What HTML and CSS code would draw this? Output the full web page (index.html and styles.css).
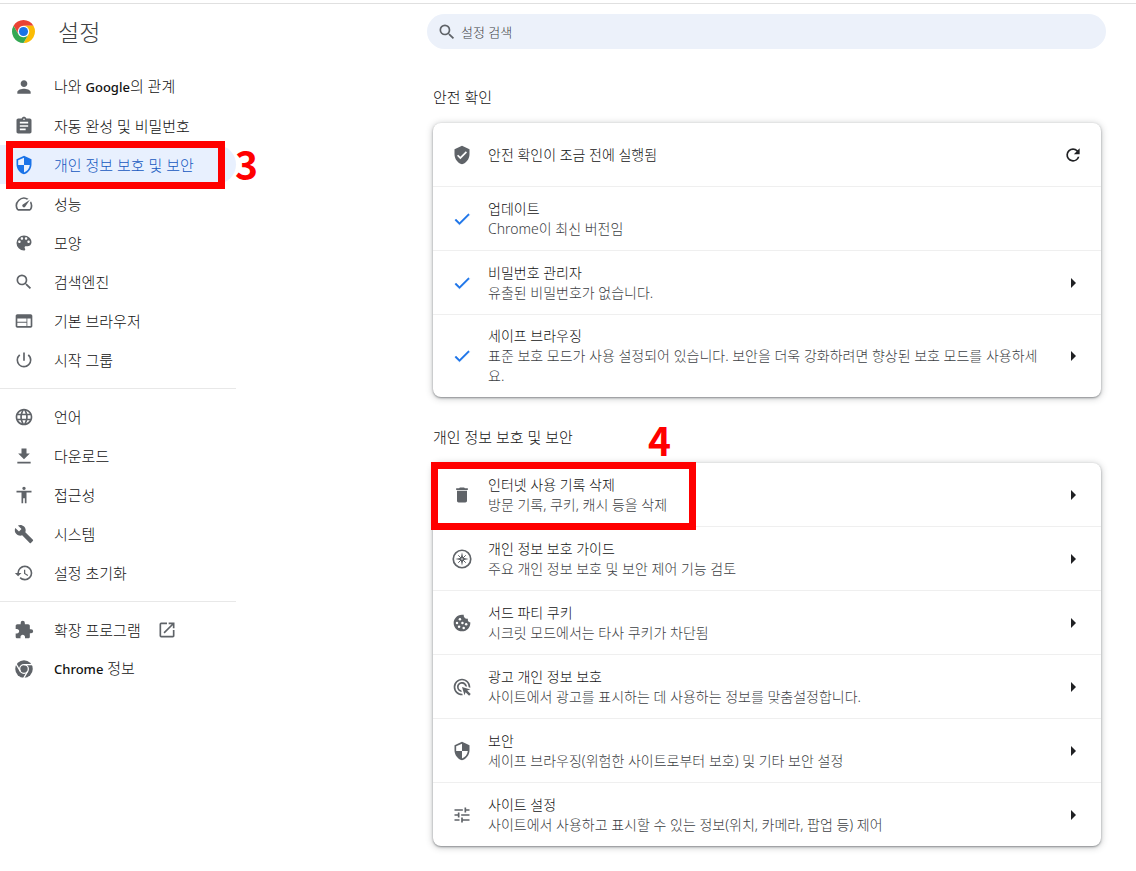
FILE: index.html
```html
<!DOCTYPE html>
<html lang="ko">
<head>
   <meta charset="utf-8">
   <title>설정</title>
   <link rel="stylesheet" href="styles.css">
</head>
<body>
   <svg class="icon-defs" aria-hidden="true">
      <symbol id="person" viewBox="0 0 24 24"><path d="M12 12c2.21 0 4-1.79 4-4s-1.79-4-4-4-4 1.79-4 4 1.79 4 4 4zm0 2c-2.67 0-8 1.34-8 4v2h16v-2c0-2.66-5.33-4-8-4z"/></symbol>
      <symbol id="assignment" viewBox="0 0 24 24"><path d="M19 3h-4.18C14.4 1.84 13.3 1 12 1c-1.3 0-2.4.84-2.82 2H5c-1.1 0-2 .9-2 2v14c0 1.1.9 2 2 2h14c1.1 0 2-.9 2-2V5c0-1.1-.9-2-2-2zm-7 0c.55 0 1 .45 1 1s-.45 1-1 1-1-.45-1-1 .45-1 1-1zm2 14H7v-2h7v2zm3-4H7v-2h10v2zm0-4H7V7h10v2z"/></symbol>
      <symbol id="security" viewBox="0 0 24 24"><path d="M12 1L3 5v6c0 5.55 3.84 10.74 9 12 5.16-1.26 9-6.45 9-12V5l-9-4zm0 10.99h7c-.53 4.12-3.28 7.79-7 8.94V12H5V6.3l7-3.11v8.8z"/></symbol>
      <symbol id="verified" viewBox="0 0 24 24"><path d="M12 1L3 5v6c0 5.55 3.84 10.74 9 12 5.16-1.26 9-6.45 9-12V5l-9-4zm-2 16l-4-4 1.41-1.41L10 14.17l6.59-6.59L18 9l-8 8z"/></symbol>
      <symbol id="speed" viewBox="0 0 24 24"><path d="M20.38 8.57l-1.23 1.85a8 8 0 0 1-.22 7.58H5.07A8 8 0 0 1 15.58 6.85l1.85-1.23A10 10 0 0 0 3.35 19a2 2 0 0 0 1.72 1h13.85a2 2 0 0 0 1.74-1 10 10 0 0 0-.27-10.44zm-9.79 6.84a2 2 0 0 0 2.83 0l5.66-8.49-8.49 5.66a2 2 0 0 0 0 2.83z"/></symbol>
      <symbol id="palette" viewBox="0 0 24 24"><path d="M12 3a9 9 0 0 0 0 18c.83 0 1.5-.67 1.5-1.5 0-.39-.15-.74-.39-1.01-.23-.26-.38-.61-.38-.99 0-.83.67-1.5 1.5-1.5H16c2.76 0 5-2.24 5-5 0-4.42-4.03-8-9-8zm-5.500 9c-.83 0-1.500-.67-1.500-1.500S5.670 9 6.500 9 8 9.670 8 10.500 7.330 12 6.500 12zm3-4C8.670 8 8 7.330 8 6.500S8.670 5 9.500 5s1.500.67 1.500 1.500S10.330 8 9.500 8zm5 0c-.83 0-1.500-.67-1.500-1.500S13.670 5 14.500 5s1.500.67 1.500 1.500S15.330 8 14.500 8zm3 4c-.83 0-1.500-.67-1.500-1.500S16.670 9 17.500 9s1.500.67 1.500 1.500-.67 1.500-1.500 1.500z"/></symbol>
      <symbol id="search" viewBox="0 0 24 24"><path d="M15.5 14h-.79l-.28-.27A6.47 6.47 0 0 0 16 9.5 6.5 6.5 0 1 0 9.500 16c1.610 0 3.090-.59 4.230-1.570l.27.28v.79l5 4.990L20.490 19l-4.990-5zm-6 0C7.010 14 5 11.990 5 9.500S7.010 5 9.500 5 14 7.010 14 9.500 11.990 14 9.500 14z"/></symbol>
      <symbol id="web" viewBox="0 0 24 24"><path d="M20 4H4c-1.1 0-1.990.9-1.990 2L2 18c0 1.1.9 2 2 2h16c1.100 0 2-.9 2-2V6c0-1.100-.9-2-2-2zm-5 14H4v-4h11v4zm0-5H4V9h11v4zm5 5h-4V9h4v9z"/></symbol>
      <symbol id="power" viewBox="0 0 24 24"><path d="M13 3h-2v10h2V3zm4.830 2.170l-1.420 1.420A6.920 6.920 0 0 1 19 12c0 3.870-3.130 7-7 7A6.995 6.995 0 0 1 7.580 6.580L6.170 5.170A8.932 8.932 0 0 0 3 12a9 9 0 0 0 18 0c0-2.740-1.230-5.180-3.170-6.830z"/></symbol>
      <symbol id="language" viewBox="0 0 24 24"><path d="M11.990 2C6.470 2 2 6.480 2 12s4.470 10 9.990 10C17.520 22 22 17.520 22 12S17.520 2 11.990 2zm6.930 6h-2.950a15.650 15.650 0 0 0-1.380-3.560A8.030 8.030 0 0 1 18.920 8zM12 4.040c.83 1.200 1.480 2.530 1.910 3.960h-3.820c.43-1.430 1.080-2.760 1.910-3.960zM4.260 14C4.100 13.360 4 12.690 4 12s.1-1.360.26-2h3.380c-.08.66-.14 1.320-.14 2s.06 1.340.14 2H4.260zm.82 2h2.950c.32 1.250.78 2.450 1.380 3.560A7.987 7.987 0 0 1 5.080 16zm2.950-8H5.080a7.987 7.987 0 0 1 4.330-3.560A15.650 15.650 0 0 0 8.030 8zM12 19.960c-.83-1.200-1.480-2.530-1.910-3.960h3.820c-.43 1.430-1.080 2.760-1.910 3.960zM14.340 14H9.660c-.09-.66-.16-1.320-.16-2s.07-1.350.16-2h4.680c.09.65.16 1.320.16 2s-.07 1.340-.16 2zm.25 5.560c.6-1.110 1.060-2.310 1.380-3.560h2.950a8.030 8.030 0 0 1-4.330 3.560zM16.360 14c.08-.66.14-1.320.14-2s-.06-1.340-.14-2h3.380c.16.64.26 1.310.26 2s-.1 1.360-.26 2h-3.380z"/></symbol>
      <symbol id="download" viewBox="0 0 24 24"><path d="M19 9h-4V3H9v6H5l7 7 7-7zM4 19v2h16v-2H4z"/></symbol>
      <symbol id="accessibility" viewBox="0 0 24 24"><path d="M12 2c1.100 0 2 .9 2 2s-.9 2-2 2-2-.9-2-2 .9-2 2-2zm9 7h-6v13h-2v-6h-2v6H9V9H3V7h18v2z"/></symbol>
      <symbol id="build" viewBox="0 0 24 24"><path d="M22.700 19l-9.100-9.100c.9-2.300.4-5-1.500-6.900-2-2-5-2.400-7.400-1.300L9 6 6 9 1.600 4.700C.4 7.100.9 10.100 2.900 12.100c1.900 1.900 4.600 2.400 6.900 1.500l9.100 9.100c.4.4 1 .4 1.400 0l2.300-2.300c.5-.4.5-1.100.1-1.400z"/></symbol>
      <symbol id="restore" viewBox="0 0 24 24"><path d="M13 3a9 9 0 0 0-9 9H1l3.890 3.890.07.14L9 12H6c0-3.870 3.130-7 7-7s7 3.130 7 7-3.130 7-7 7c-1.930 0-3.680-.79-4.940-2.060l-1.420 1.420A8.954 8.954 0 0 0 13 21a9 9 0 0 0 0-18zm-1 5v5l4.280 2.540.72-1.210-3.500-2.080V8H12z"/></symbol>
      <symbol id="extension" viewBox="0 0 24 24"><path d="M20.500 11H19V7c0-1.100-.9-2-2-2h-4V3.500a2.500 2.500 0 0 0-5 0V5H4c-1.100 0-1.990.9-1.990 2v3.800H3.500c1.490 0 2.700 1.210 2.700 2.700s-1.210 2.700-2.700 2.700H2V20c0 1.100.9 2 2 2h3.800v-1.500c0-1.490 1.210-2.700 2.700-2.700s2.700 1.210 2.700 2.700V22H17c1.100 0 2-.9 2-2v-4h1.500a2.500 2.500 0 0 0 0-5z"/></symbol>
      <symbol id="open" viewBox="0 0 24 24"><path d="M19 19H5V5h7V3H5a2 2 0 0 0-2 2v14a2 2 0 0 0 2 2h14c1.100 0 2-.9 2-2v-7h-2v7zM14 3v2h3.590l-9.830 9.830 1.410 1.410L19 6.410V10h2V3h-7z"/></symbol>
      <symbol id="chrome" viewBox="0 0 24 24">
         <circle cx="12" cy="12" r="10.500"/>
         <g fill="none" stroke="#fff" stroke-width="1.500"><circle cx="12" cy="12" r="5.200"/><path d="M12 6.800h10.500M7.500 14.600L2.400 5.800M16.500 14.600L11.200 23.800"/></g>
      </symbol>
      <symbol id="check" viewBox="0 0 24 24"><path stroke="currentColor" stroke-width=".5" d="M9 16.170L4.830 12l-1.420 1.410L9 19 21 7l-1.410-1.410z"/></symbol>
      <symbol id="refresh" viewBox="0 0 24 24"><path d="M17.650 6.350A7.958 7.958 0 0 0 12 4a8 8 0 1 0 7.730 10h-2.080A5.990 5.990 0 0 1 12 18a6 6 0 1 1 0-12c1.660 0 3.140.69 4.220 1.780L13 11h7V4l-2.350 2.350z"/></symbol>
      <symbol id="delete" viewBox="0 0 24 24"><path d="M6 19c0 1.100.9 2 2 2h8c1.100 0 2-.9 2-2V7H6v12zM19 4h-3.500l-1-1h-5l-1 1H5v2h14V4z"/></symbol>
      <symbol id="guide" viewBox="0 0 24 24">
         <circle cx="12" cy="12" r="10.500" fill="none" stroke="currentColor" stroke-width="2"/>
         <path d="M12 4l1.500 6.500L20 12l-6.500 1.500L12 20l-1.500-6.500L4 12l6.500-1.500z"/>
         <path d="M7.500 7.500l9 9M16.500 7.500l-9 9" stroke="currentColor" stroke-width="1.200"/>
         <circle cx="12" cy="12" r="1" fill="#fff"/>
      </symbol>
      <symbol id="cookie" viewBox="0 0 24 24">
         <path d="M21.950 10.990c-1.790-.03-3.700-1.950-2.680-4.220-2.980 1-5.770-1.590-5.190-4.560C6.950.71 2 6.580 2 12c0 5.520 4.480 10 10 10 5.890 0 10.540-5.080 9.950-11.010z"/>
         <g fill="#fff"><circle cx="9.500" cy="7.500" r="1.500"/><circle cx="6" cy="12" r="1.500"/><circle cx="12.500" cy="12" r="1.500"/><circle cx="8.500" cy="16.500" r="1.500"/><circle cx="14" cy="18" r="1.500"/><circle cx="17" cy="13.500" r="1.500"/></g>
      </symbol>
      <symbol id="ads" viewBox="0 0 24 24"><path d="M11.710 17.990A5.993 5.993 0 0 1 6 12c0-3.310 2.690-6 6-6 3.220 0 5.840 2.530 5.990 5.710l-2.100-.63a3.999 3.999 0 1 0-4.810 4.810l.63 2.100zM22 12c0 .3-.01.6-.04.900l-1.970-.59c.01-.1.010-.21.010-.31a8 8 0 1 0-8 8c.1 0 .21 0 .31-.01l.59 1.970c-.3.03-.6.04-.9.040-5.520 0-10-4.480-10-10S6.480 2 12 2s10 4.480 10 10zm-3.770 4.260L22 15l-10-3 3 10 1.260-3.770 4.270 4.270 1.980-1.980-4.280-4.260z"/></symbol>
      <symbol id="tune" viewBox="0 0 24 24"><path d="M3 17v2h6v-2H3zM3 5v2h10V5H3zm10 16v-2h8v-2h-8v-2h-2v6h2zM7 9v2H3v2h4v2h2V9H7zm14 4v-2H11v2h10zm-6-4h2V7h4V5h-4V3h-2v6z"/></symbol>
      <symbol id="arrow" viewBox="0 0 6 10"><path d="M1 0l5 5-5 5z"/></symbol>
   </svg>

   <div class="layout">
      <aside class="sidebar">
         <header class="brand">
            <svg class="logo" viewBox="0 0 48 48" aria-hidden="true">
               <circle cx="24" cy="24" r="13" fill="#fff"/>
               <path fill="#ea4335" d="M24 12h20.780A24 24 0 0 0 3.220 12l10.390 18A12 12 0 0 1 24 12z"/>
               <path fill="#fbbc04" d="M34.390 30L24 48a24 24 0 0 0 20.780-36H24a12 12 0 0 1 10.390 18z"/>
               <path fill="#34a853" d="M13.610 30L3.220 12A24 24 0 0 0 24 48l10.390-18a12 12 0 0 1-20.780 0z"/>
               <circle cx="24" cy="24" r="9.500" fill="#1a73e8"/>
            </svg>
            <h1>설정</h1>
         </header>
         <nav>
            <div class="menu-group">
               <a class="menu-item" href="#people"><svg class="icon"><use href="#person"/></svg><span>나와 <b>Google</b>의 관계</span></a>
               <a class="menu-item" href="#autofill"><svg class="icon"><use href="#assignment"/></svg>자동 완성 및 비밀번호</a>
               <a class="menu-item active" href="#privacy"><svg class="icon"><use href="#security"/></svg>개인 정보 보호 및 보안
                  <span class="mark mark-menu"></span><span class="step step-menu">3</span></a>
               <a class="menu-item" href="#performance"><svg class="icon"><use href="#speed"/></svg>성능</a>
               <a class="menu-item" href="#appearance"><svg class="icon"><use href="#palette"/></svg>모양</a>
               <a class="menu-item" href="#engine"><svg class="icon"><use href="#search"/></svg>검색엔진</a>
               <a class="menu-item" href="#browser"><svg class="icon"><use href="#web"/></svg>기본 브라우저</a>
               <a class="menu-item" href="#startup"><svg class="icon"><use href="#power"/></svg>시작 그룹</a>
            </div>
            <div class="menu-group">
               <a class="menu-item" href="#languages"><svg class="icon"><use href="#language"/></svg>언어</a>
               <a class="menu-item" href="#downloads"><svg class="icon"><use href="#download"/></svg>다운로드</a>
               <a class="menu-item" href="#a11y"><svg class="icon"><use href="#accessibility"/></svg>접근성</a>
               <a class="menu-item" href="#system"><svg class="icon"><use href="#build"/></svg>시스템</a>
               <a class="menu-item" href="#reset"><svg class="icon"><use href="#restore"/></svg>설정 초기화</a>
            </div>
            <div class="menu-group">
               <a class="menu-item" href="#extensions"><svg class="icon"><use href="#extension"/></svg>확장 프로그램<svg class="icon"><use href="#open"/></svg></a>
               <a class="menu-item" href="#about"><svg class="icon"><use href="#chrome"/></svg><span><b>Chrome</b> 정보</span></a>
            </div>
         </nav>
      </aside>

      <main class="content">
         <label class="search">
            <svg class="icon"><use href="#search"/></svg>
            <input type="search" placeholder="설정 검색" aria-label="설정 검색">
         </label>

         <section>
            <h2>안전 확인</h2>
            <div class="card">
               <div class="row">
                  <svg class="icon"><use href="#verified"/></svg>
                  <div class="text"><p>안전 확인이 조금 전에 실행됨</p></div>
                  <button type="button" aria-label="안전 확인 다시 실행"><svg class="icon"><use href="#refresh"/></svg></button>
               </div>
               <div class="row">
                  <svg class="icon ok"><use href="#check"/></svg>
                  <div class="text"><p>업데이트</p><p class="sub">Chrome이 최신 버전임</p></div>
               </div>
               <div class="row">
                  <svg class="icon ok"><use href="#check"/></svg>
                  <div class="text"><p>비밀번호 관리자</p><p class="sub">유출된 비밀번호가 없습니다.</p></div>
                  <button type="button" aria-label="비밀번호 관리자"><svg class="arrow"><use href="#arrow"/></svg></button>
               </div>
               <div class="row">
                  <svg class="icon ok"><use href="#check"/></svg>
                  <div class="text"><p>세이프 브라우징</p><p class="sub">표준 보호 모드가 사용 설정되어 있습니다. 보안을 더욱 강화하려면 향상된 보호 모드를 사용하세요.</p></div>
                  <button type="button" aria-label="세이프 브라우징"><svg class="arrow"><use href="#arrow"/></svg></button>
               </div>
            </div>
         </section>

         <section>
            <h2>개인 정보 보호 및 보안</h2>
            <div class="card">
               <div class="row">
                  <svg class="icon"><use href="#delete"/></svg>
                  <div class="text"><p>인터넷 사용 기록 삭제</p><p class="sub">방문 기록, 쿠키, 캐시 등을 삭제</p></div>
                  <button type="button" aria-label="인터넷 사용 기록 삭제"><svg class="arrow"><use href="#arrow"/></svg></button>
                  <span class="mark mark-row"></span><span class="step step-row">4</span>
               </div>
               <div class="row">
                  <svg class="icon"><use href="#guide"/></svg>
                  <div class="text"><p>개인 정보 보호 가이드</p><p class="sub">주요 개인 정보 보호 및 보안 제어 기능 검토</p></div>
                  <button type="button" aria-label="개인 정보 보호 가이드"><svg class="arrow"><use href="#arrow"/></svg></button>
               </div>
               <div class="row">
                  <svg class="icon"><use href="#cookie"/></svg>
                  <div class="text"><p>서드 파티 쿠키</p><p class="sub">시크릿 모드에서는 타사 쿠키가 차단됨</p></div>
                  <button type="button" aria-label="서드 파티 쿠키"><svg class="arrow"><use href="#arrow"/></svg></button>
               </div>
               <div class="row">
                  <svg class="icon"><use href="#ads"/></svg>
                  <div class="text"><p>광고 개인 정보 보호</p><p class="sub">사이트에서 광고를 표시하는 데 사용하는 정보를 맞춤설정합니다.</p></div>
                  <button type="button" aria-label="광고 개인 정보 보호"><svg class="arrow"><use href="#arrow"/></svg></button>
               </div>
               <div class="row">
                  <svg class="icon"><use href="#security"/></svg>
                  <div class="text"><p>보안</p><p class="sub">세이프 브라우징(위험한 사이트로부터 보호) 및 기타 보안 설정</p></div>
                  <button type="button" aria-label="보안"><svg class="arrow"><use href="#arrow"/></svg></button>
               </div>
               <div class="row">
                  <svg class="icon"><use href="#tune"/></svg>
                  <div class="text"><p>사이트 설정</p><p class="sub">사이트에서 사용하고 표시할 수 있는 정보(위치, 카메라, 팝업 등) 제어</p></div>
                  <button type="button" aria-label="사이트 설정"><svg class="arrow"><use href="#arrow"/></svg></button>
               </div>
            </div>
         </section>
      </main>
   </div>
</body>
</html>
```
FILE: styles.css
```css
* {
   box-sizing: border-box;
}

body {
   margin: 0;
   padding-top: 3px;
   background-color: #fff;
   color: #111;
   font-family: "Noto Sans", "Noto Sans CJK KR", sans-serif;
   font-size: 14px;
   font-weight: 300;
   line-height: 20px;
}

h1, h2, p {
   margin: 0;
   font-weight: 300;
}

.icon-defs {
   position: absolute;
   width: 0;
   height: 0;
}

.icon {
   flex: none;
   width: 20px;
   height: 20px;
   color: #5f6368;
   fill: currentColor;
}

.layout {
   display: grid;
   grid-template-columns: 236px 1fr;
   border-top: 1px solid #e0e0e0;
}

/* sidebar */
.brand {
   display: flex;
   align-items: center;
   gap: 23px;
   height: 55px;
   padding-left: 12px;
}

.logo {
   width: 23px;
   height: 23px;
}

h1 {
   color: #3c4043;
   font-size: 23px;
   line-height: 32px;
}

.menu-group {
   padding: 8px 0 9px;
   border-bottom: 1px solid #e8e8e8;
}

.menu-group:last-child {
   border-bottom: none;
}

.menu-item {
   position: relative;
   display: flex;
   align-items: center;
   gap: 16px;
   height: 39px;
   padding-left: 14px;
   border-radius: 0 20px 20px 0;
   color: #111;
   font-size: 15px;
   text-decoration: none;
   white-space: nowrap;
}

.menu-item .icon:first-child {
   margin-right: 4px;
}

.menu-item b {
   font-size: 13px;
   font-weight: 500;
}

.menu-item.active {
   background-color: #e8f0fe;
   color: #1558c0;
}

.menu-item.active .icon {
   color: #1a73e8;
}

/* content */
.content {
   padding: 10px 35px 24px 197px;
}

.search {
   display: flex;
   align-items: center;
   gap: 4px;
   height: 35px;
   margin: 0 -5px 0 -6px;
   padding: 0 10px;
   border-radius: 18px;
   background-color: #ecf1fa;
}

.search input {
   flex: 1;
   min-width: 0;
   padding: 0;
   border: none;
   outline: none;
   background: none;
   font: inherit;
   font-size: 13px;
}

.search input::placeholder {
   color: #3c4043;
   opacity: 1;
}

h2 {
   padding: 38px 0 16px;
   font-size: 15px;
}

section + section h2 {
   padding-top: 30px;
}

.card {
   border-radius: 8px;
   background-color: #fff;
   box-shadow: 0 1px 2px rgba(60, 64, 67, 0.5), 0 1px 6px 1px rgba(60, 64, 67, 0.25);
}

.row {
   position: relative;
   display: flex;
   align-items: center;
   gap: 16px;
   min-height: 64px;
   padding: 11px 18px 11px 19px;
   border-top: 1px solid #efefef;
}

.row:first-child {
   min-height: 63px;
   border-top: none;
}

.row .ok {
   color: #1a73e8;
}

.text {
   flex: 1;
   margin-right: 4px;
}

.sub {
   color: #3c4043;
}

.row button {
   display: flex;
   align-items: center;
   justify-content: center;
   width: 20px;
   height: 20px;
   padding: 0;
   border: none;
   background: none;
   cursor: pointer;
}

.row button .icon {
   color: #202124;
}

.arrow {
   width: 6px;
   height: 10px;
   fill: #202124;
}

/* red step markers over the page */
.mark {
   position: absolute;
   z-index: 1;
   border: 7px solid #f00;
}

.mark-menu {
   top: -4px;
   bottom: -5px;
   left: 6px;
   right: 11px;
}

.mark-row {
   top: -1px;
   bottom: -4px;
   left: -2px;
   width: 265px;
}

.step {
   position: absolute;
   color: #f00;
   font-family: "Noto Sans CJK KR", sans-serif;
   font-size: 39px;
   font-weight: 700;
   line-height: 40px;
}

.step-menu {
   top: -2px;
   left: 235px;
}

.step-row {
   top: -44px;
   left: 215px;
}
```
